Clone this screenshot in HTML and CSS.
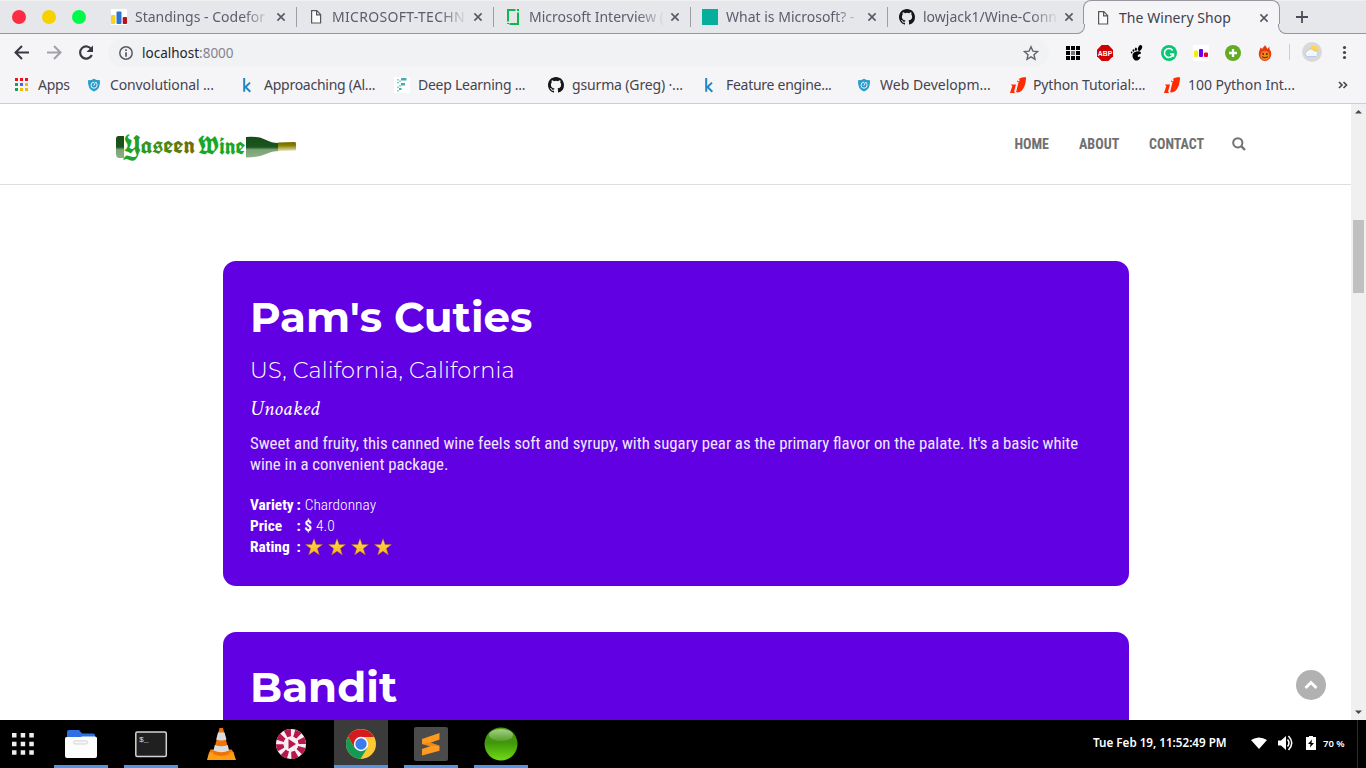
FILE: index.html
```html
<!DOCTYPE html>
<html lang="en">
<head>
<meta charset="utf-8">
<title>The Winery Shop</title>
<link rel="stylesheet" href="styles.css">
</head>
<body>
<svg class="defs" width="0" height="0">
  <symbol id="gh" viewBox="0 0 16 16"><path fill="#17151a" d="M8 0C3.58 0 0 3.58 0 8c0 3.54 2.29 6.53 5.47 7.59.4.07.55-.17.55-.38 0-.19-.01-.82-.01-1.49-2.01.37-2.53-.49-2.69-.94-.09-.23-.48-.94-.82-1.13-.28-.15-.68-.52-.01-.53.63-.01 1.08.58 1.23.82.72 1.21 1.87.87 2.33.66.07-.52.28-.87.51-1.07-1.78-.2-3.64-.89-3.64-3.95 0-.87.31-1.59.82-2.15-.08-.2-.36-1.02.08-2.12 0 0 .67-.21 2.2.82a7.6 7.6 0 0 1 4 0c1.53-1.04 2.2-.82 2.2-.82.44 1.1.16 1.92.08 2.12.51.56.82 1.27.82 2.15 0 3.07-1.87 3.75-3.65 3.95.29.25.54.73.54 1.48 0 1.07-.01 1.93-.01 2.2 0 .21.15.46.55.38A8 8 0 0 0 16 8c0-4.42-3.58-8-8-8z"/></symbol>
  <symbol id="doc" viewBox="0 0 16 16"><path fill="#fbfbfb" stroke="#5a5658" stroke-width="1.200" d="M3.600 1.600h5.200l3.800 3.800v8.600h-9zM8.600 1.800v4h3.800"/></symbol>
  <symbol id="x" viewBox="0 0 10 10"><path fill="none" stroke="#5a5866" stroke-width="1.600" d="M1.400 1.400l7.200 7.200M8.600 1.400L1.400 8.600"/></symbol>
  <symbol id="shield" viewBox="0 0 16 16"><path fill="#2b9ccb" d="M2 3.300Q5.500 3.300 8 1.800q2.500 1.500 6 1.500.6 9-6 11.200Q1.400 12.300 2 3.300z"/><path fill="none" stroke="#e9f5fa" stroke-width="1" d="M8 5.200a3 3 0 1 0 3 3q0-1.500-.8-3M7.800 8.700L9.500 5"/></symbol>
  <symbol id="k" viewBox="0 0 16 16"><path fill="none" stroke="#2086c8" stroke-width="2" d="M3.200 1v13.800M9 5.600L4.500 10l4.800 4.800"/></symbol>
  <symbol id="leaf" viewBox="0 0 16 16"><path fill="#ff2a00" d="M16 .2C16 7 13.500 15 7.500 15.600c-.8.100-1.300-.2-1.300-.8L8.500 5H7c.500-3 3-4.800 9-4.800zM.8 7.500H6L4.200 14q-.2 1.300 1 1.900L0 16l2.300-7z"/><path stroke="#f5f5f8" stroke-width="1.800" d="M8.800 2.200l-.5 2"/></symbol>
  <symbol id="star" viewBox="0 0 18 18"><path fill="url(#gold)" stroke="#9c5d00" stroke-width=".4" d="M9 .5l2.100 6.100h6.500l-5.200 3.900 2 6.500L9 13.200l-5.400 3.800 2-6.500L.4 6.600h6.500z"/></symbol>
  <defs><linearGradient id="gold" x2="0" y2="1"><stop stop-color="#ffe052"/><stop offset="1" stop-color="#fbb51c"/></linearGradient></defs>
</svg>

<header class="tabs">
  <div class="lights"><i class="red"></i><i class="yellow"></i><i class="green"></i></div>
  <div class="tab first"><svg class="fav" viewBox="0 0 16 16"><path fill="#fff" d="M0 0h16v16H0z"/><rect y="6" width="4.500" height="9" rx="1" fill="#f7d320"/><rect x="5.500" y="2.500" width="5" height="12.500" rx="1" fill="#2d76cf"/><rect x="11.700" y="8" width="4.300" height="7" rx="1" fill="#b5121b"/></svg><span class="label">Standings - Codefor</span><svg class="x"><use href="#x"/></svg></div>
  <div class="tab"><svg class="fav"><use href="#doc"/></svg><span class="label up">MICROSOFT-TECHN</span><svg class="x"><use href="#x"/></svg></div>
  <div class="tab"><svg class="fav" viewBox="0 0 16 16"><path fill="none" stroke="#0eb94b" stroke-width="2" d="M10.500 1H3v11.500M13 3.500V15H4.500M12 1h2M3 14v1"/></svg><span class="label">Microsoft Interview (</span><svg class="x"><use href="#x"/></svg></div>
  <div class="tab"><svg class="fav" viewBox="0 0 16 16"><path fill="#06ae9c" d="M0 0h16v16H0z"/></svg><span class="label">What is Microsoft? -</span><svg class="x"><use href="#x"/></svg></div>
  <div class="tab"><svg class="fav"><use href="#gh"/></svg><span class="label">lowjack1/Wine-Conn</span><svg class="x"><use href="#x"/></svg></div>
  <div class="tab active"><svg class="fav"><use href="#doc"/></svg><span class="label">The Winery Shop</span><svg class="x"><use href="#x"/></svg></div>
  <svg class="plus" viewBox="0 0 12 12"><path stroke="#4c4a5c" stroke-width="1.800" d="M6 0v12M0 6h12"/></svg>
</header>

<div class="toolbar">
  <svg class="nav" viewBox="0 0 100 36"><g fill="none" stroke="#3a3843" stroke-width="2"><path d="M29 17.500H16M22 11l-6.500 6.500L22 24"/><path stroke="#a3a1a8" d="M47 17.500h13M54 11l6.500 6.500L54 24"/><path stroke-width="2.200" d="M91.500 14.500a6.100 6.100 0 1 0 .3 5.500"/></g><path fill="#3a3843" d="M93 10.500V17h-6.500z"/></svg>
  <div class="omnibox">
    <svg width="16" height="16" viewBox="0 0 16 16"><circle cx="8" cy="8" r="6.200" fill="none" stroke="#5b5963" stroke-width="1.500"/><path stroke="#5b5963" stroke-width="1.700" d="M8 4.300V6M8 7.200v4.500"/></svg>
    <span class="url">localhost<em>:8000</em></span>
    <svg class="bm" width="16" height="16" viewBox="0 0 16 16"><path fill="none" stroke="#66646b" stroke-width="1.400" d="M8 1.800l1.900 4.300 4.600.5-3.500 3.100 1 4.600-4-2.400-4 2.400 1-4.600L1.500 6.600l4.600-.5z"/></svg>
  </div>
  <div class="exts">
    <svg viewBox="0 0 16 16"><path d="M1 1h4v4H1zM6 1h4v4H6zM11 1h4v4h-4zM1 6h4v4H1zM11 6h4v4h-4zM1 11h4v4H1zM6 11h4v4H6zM11 11h4v4h-4z"/><path fill="#777" d="M6 6h4v4H6z"/></svg>
    <svg viewBox="0 0 16 16"><path fill="#d00000" d="M4.700 0h6.600L16 4.700v6.600L11.300 16H4.700L0 11.300V4.700z"/><text class="abp" x="8" y="10.700" text-anchor="middle">ABP</text></svg>
    <svg viewBox="0 0 16 16"><path d="M5.500 7.300C8 5.800 12 6 12 8c0 1.200-3.300 1-3.300 2.700 0 1.300 1.300 1.600 2.300.8l.6 1C9.500 16.700 5 16.500 3.800 12.500c-.7-2.300-.2-4.200 1.700-5.200z"/><ellipse cx="11" cy="3" rx="1.900" ry="3" transform="rotate(25 11 3)"/><ellipse cx="6.900" cy="4.200" rx="1" ry="1.600"/><ellipse cx="4.500" cy="5.500" rx=".9" ry="1.300"/><ellipse cx="2.600" cy="7.500" rx=".8" ry="1.100"/></svg>
    <svg viewBox="0 0 16 16"><circle cx="8" cy="8" r="8" fill="#08c674"/><path fill="none" stroke="#fff" stroke-width="1.600" d="M11.700 5.500A4.500 4.500 0 1 0 12.300 9H9M12.400 8.500v3.300"/></svg>
    <svg viewBox="0 0 16 16"><path fill="#fff" d="M0 0h16v16H0z"/><rect x="1" y="5.500" width="4" height="6.500" rx="1" fill="#f7ee00"/><rect x="6" y="4" width="4" height="8" rx="1" fill="#6c00f5"/><rect x="11" y="7.500" width="4" height="4.500" rx="1" fill="#f00020"/></svg>
    <svg viewBox="0 0 16 16"><circle cx="8" cy="8" r="8" fill="#62ab25"/><path stroke="#fff" stroke-width="2.300" d="M8 4v8M4 8h8"/></svg>
    <svg viewBox="0 0 16 16"><path fill="#e93a0d" d="M8 0c1 2 2 2.500 2.400 4l2-2.500c-.2 2.300.3 3 1.300 4.500C15.500 12 12 16 8 16S.5 12 2.300 6L3.500 2.500 5.300 4C5.300 2.500 7.300 2 8 0z"/><circle cx="8" cy="10.500" r="4.500" fill="#ec8a1e"/><path fill="none" stroke="#622000" stroke-width="1.400" d="M6.200 8v2M9.800 8v2"/><path fill="none" stroke="#622000" stroke-width="1" d="M5 11.800q3 2 6 0"/></svg>
  </div>
  <svg class="tail" viewBox="0 0 77 36"><path stroke="#cdcbe0" d="M.5 9v16"/><circle cx="23" cy="17" r="10" fill="#d9d9da"/><circle cx="25" cy="15" r="4.500" fill="#ffd64f"/><path fill="#f2f6ff" stroke="#a4bfe8" stroke-width=".7" d="M18.500 21.500a2.800 2.800 0 0 1 0-5.500 3.600 3.600 0 0 1 6.500 0 2.800 2.800 0 0 1 2 5.500z"/><g fill="#46434e"><circle cx="55.500" cy="12.500" r="1.600"/><circle cx="55.500" cy="17.500" r="1.600"/><circle cx="55.500" cy="22.500" r="1.600"/></g></svg>
</div>

<nav class="bookmarks">
  <a class="b72"><svg viewBox="0 0 16 16"><path fill="#f01018" d="M0 1h3v3H0zM5 1h3v3H5zM10 1h3v3h-3z"/><path fill="#13a353" d="M0 6h3v3H0zM0 11h3v3H0z"/><path fill="#4a62f2" d="M5 6h3v3H5z"/><path fill="#f8b50a" d="M10 6h3v3h-3zM5 11h3v3H5zM10 11h3v3h-3z"/></svg><span class="w0">Apps</span></a>
  <a class="b154"><svg viewBox="1 0 16 16"><use href="#shield" width="16" height="16"/></svg><span class="w1">Convolutional ...</span></a>
  <a class="b153"><svg><use href="#k"/></svg><span class="w2">Approaching (Al...</span></a>
  <a class="b154"><svg viewBox="0 0 16 16"><path fill="#fff" d="M0 0h16v16H0z"/><path fill="#45aead" d="M7 1h5.500v2.500H7zM7 6h4v2.500H7zM5 11h2.500v2H5z"/><path fill="#8bd4d0" d="M3 2h2v1.500H3zM5 3.500h2V5H5zM3 5h2v1.500H3zM5 8h2v1.500H5zM3 9.500h2V11H3zM3 13h2v1.500H3z"/></svg><span class="w3">Deep Learning ...</span></a>
  <a class="b155"><svg><use href="#gh"/></svg><span class="w4">gsurma (Greg) ·...</span></a>
  <a class="b154"><svg><use href="#k"/></svg><span class="w5">Feature engine...</span></a>
  <a class="b153"><svg viewBox="1 0 16 16"><use href="#shield" width="16" height="16"/></svg><span class="w6">Web Developm...</span></a>
  <a class="b154"><svg><use href="#leaf"/></svg><span class="w7">Python Tutorial:...</span></a>
  <a class="b154"><svg><use href="#leaf"/></svg><span class="w8">100 Python Int...</span></a>
  <svg class="more" viewBox="0 0 10 16"><path fill="none" stroke="#4a4854" stroke-width="1.700" d="M1 5l3 3-3 3M5.500 5l3 3-3 3"/></svg>
</nav>

<div class="view">
  <main class="page">
    <div class="site-head">
      <svg class="logo" viewBox="0 0 182 36" width="182" height="36">
        <defs>
          <linearGradient id="glass" x2="0" y2="1"><stop stop-color="#174b19"/><stop offset=".5" stop-color="#1b571d"/><stop offset=".62" stop-color="#7aa377"/><stop offset="1" stop-color="#8cb086"/></linearGradient>
          <linearGradient id="neck" x2="0" y2="1"><stop stop-color="#6d6500"/><stop offset=".4" stop-color="#8a8200"/><stop offset="1" stop-color="#e5e3c0"/></linearGradient>
          <linearGradient id="word"><stop stop-color="#17a82a"/><stop offset=".5" stop-color="#3e8f16"/><stop offset="1" stop-color="#7a6a00"/></linearGradient>
        </defs>
        <path fill="url(#glass)" d="M3.500 5H9v22H3.500q-2.500-1-2.500-3.500V8q0-3 2.500-3z"/>
        <path fill="url(#glass)" d="M131 6q12-1 19 2.500 7 3.500 13 3.500v8q-6 0-12 3-8 3.500-20 3.500z"/>
        <path fill="url(#neck)" d="M163 11.500l17-.5q1 0 1 2v5q0 1.500-1 1.500l-17 .5z"/>
        <text class="word" x="9" y="22.500" fill="url(#word)" textLength="71" lengthAdjust="spacingAndGlyphs">Yaseen</text>
        <text class="word" x="83" y="24" fill="#17a82a" textLength="47" lengthAdjust="spacingAndGlyphs">Wine</text>
      </svg>
      <div class="menu"><a class="m1">HOME</a><a class="m2">ABOUT</a><a class="m3">CONTACT</a><svg width="14" height="14" viewBox="0 0 14 14"><circle cx="5.800" cy="5.800" r="4.600" fill="none" stroke="#727272" stroke-width="2"/><path stroke="#727272" stroke-width="2.400" d="M9.200 9.200l3.800 3.800"/></svg></div>
    </div>
    <section class="card">
      <h1>Pam's Cuties</h1>
      <h2>US, California, California</h2>
      <h3>Unoaked</h3>
      <p class="desc">Sweet and fruity, this canned wine feels soft and syrupy, with sugary pear as the primary flavor on the palate. It's a basic white wine in a convenient package.</p>
      <dl>
        <div><dt class="key">Variety</dt><dt>:</dt><dd>Chardonnay</dd></div>
        <div><dt class="key">Price</dt><dt>: $</dt><dd>4.0</dd></div>
        <div><dt class="key">Rating</dt><dt>:</dt><dd class="stars"><svg><use href="#star"/></svg><svg><use href="#star"/></svg><svg><use href="#star"/></svg><svg><use href="#star"/></svg></dd></div>
      </dl>
    </section>
    <section class="card"><h1>Bandit</h1></section>
    <div class="to-top"><svg width="14" height="10" viewBox="0 0 14 10"><path fill="none" stroke="#fff" stroke-width="2.800" d="M1.500 8L7 2.500 12.500 8"/></svg></div>
  </main>
  <aside class="scroll"><svg viewBox="0 0 15 6"><path fill="#484848" d="M4 5.500L7.500 2 11 5.500z"/></svg><i></i><svg viewBox="0 0 15 6"><path fill="#484848" d="M4 .5L7.500 4 11 .5z"/></svg></aside>
</div>

<footer class="dock">
  <div class="app grid"><svg viewBox="0 0 46 48"><g fill="#eee"><path d="M12 13h4.500v4.500H12zM20.700 13h4.500v4.500h-4.500zM29.300 13h4.500v4.500h-4.500zM12 21.700h4.500v4.500H12zM20.700 21.700h4.500v4.500h-4.500zM29.300 21.700h4.500v4.500h-4.500zM12 30.300h4.500v4.500H12zM20.700 30.300h4.500v4.500h-4.500zM29.300 30.300h4.500v4.500h-4.500z"/></g></svg></div>
  <div class="app open"><svg viewBox="0 0 54 48"><path fill="#2f6fe4" d="M13 12q0-2 2-2h10l3 3.500h11q2 0 2 2V20H13z"/><path fill="#fdfdfd" d="M11 18.500q0-1.500 1.500-1.500h14l2-.5h12.500q2 0 2 2V36q0 2-2 2H13q-2 0-2-2z"/><rect x="19.500" y="20.800" width="14" height="3.200" rx="1.600" fill="#f7f7f7" stroke="#ccc" stroke-width=".8"/></svg></div>
  <div class="app open"><svg viewBox="0 0 54 48"><rect x="11.800" y="12" width="30.500" height="24.500" rx="1.500" fill="#202020" stroke="#d5d5d0" stroke-width="1.500"/><text class="term" x="15" y="22">$_</text></svg></div>
  <div class="app"><svg viewBox="0 0 54 48"><path fill="#f57c00" d="M15 33l1.500-3.500h21L40 33z"/><path fill="#ff9d16" d="M15 32.500h24.500l2.500 7.500H13z"/><path fill="#ee7409" d="M25.500 8h3.500l6.500 26q-8 4-16.500 0z"/><path fill="#d9dde0" d="M24 12.500h6.500l2 7q-5 2-10.300 0zM20.800 25q6.500 2.500 13 0l1.200 5.500q-7.500 3.500-15.500 0z"/></svg></div>
  <div class="app"><svg viewBox="0 0 54 48"><circle cx="27" cy="24" r="15" fill="#f6eef0"/><circle cx="27" cy="24" r="11.200" fill="none" stroke="#b6174d" stroke-width="7.600" stroke-dasharray="5.400 3.400" transform="rotate(15 27 24)"/><circle cx="27" cy="24" r="7.400" fill="#f8eff1"/><path fill="#b6174d" d="M24.500 19l7.500 5-7.500 5z"/></svg></div>
  <div class="app open current"><svg viewBox="0 0 54 48"><circle cx="27" cy="24" r="15" fill="#fcc934"/><path fill="#d61b1e" d="M14 16.500A15 15 0 0 1 40 17H27l-6.500 11z"/><path fill="#139a57" d="M14 16.500A15 15 0 0 0 26.500 39l7-11.500-13 .5z"/><circle cx="27" cy="24" r="7.200" fill="#fff"/><circle cx="27" cy="24" r="5.700" fill="#3b7ded"/></svg></div>
  <div class="app open"><svg viewBox="0 0 54 48"><rect x="10" y="7" width="34" height="34" rx="2" fill="#4b4b4b"/><path fill="#ff9a20" d="M18 19l17.500-6v6.500l-9 3.200 9 3v5L18 35.500V29l8-2.800-8-2.200z"/><path fill="#df7f10" d="M18 24l8.500-1.500 9 3.200L26 26.300z" opacity=".6"/></svg></div>
  <div class="app open"><svg viewBox="0 0 54 48"><defs><linearGradient id="ball" x2="0" y2="1"><stop stop-color="#4a9d15"/><stop offset=".45" stop-color="#3f960b"/><stop offset="1" stop-color="#6fdc13"/></linearGradient><linearGradient id="shine" x2="0" y2="1"><stop stop-color="#a5cf88"/><stop offset="1" stop-color="#57a02a"/></linearGradient></defs><circle cx="27" cy="24" r="16.500" fill="url(#ball)"/><ellipse cx="27" cy="15" rx="12" ry="6" fill="url(#shine)"/></svg></div>
  <div class="status"><span class="clock">Tue Feb 19, 11:52:49 PM</span>
    <svg viewBox="0 0 68 20" width="68" height="20"><path fill="#fff" d="M0 7q8-5 16 0l-8 9zM27 7.500h3l5-4.500v14l-5-4.500h-3zM55 4h3V3h4v1h3v13H55z"/><path fill="none" stroke="#fff" stroke-width="1.500" d="M36.500 6.500q3 3.500 0 7M37.500 3q6.500 7 0 14"/><path d="M61 6.500l-4 4.500h2.500l-.5 3.500 4-4.500h-2.500z"/></svg>
    <span class="pct">70 %</span></div>
</footer>
</body>
</html>
```
FILE: styles.css
```css
* { box-sizing: border-box; }
body { margin: 0; width: 1366px; height: 768px; overflow: hidden; display: flex; flex-direction: column; background: #fff; font-family: "Noto Sans", sans-serif; }
svg { display: block; flex: none; }
.defs { position: absolute; }

.tabs { height: 34px; flex: none; display: flex; background: #e6e7eb; box-shadow: inset 0 -1px #98959f, inset 0 1px #f0f0f2; }
.lights { width: 99px; padding: 10px 0 0 12px; display: flex; gap: 16px; }
.lights i { width: 14px; height: 14px; border-radius: 50%; }
.red { background: #fc2c43; }
.yellow { background: #f7d000; }
.green { background: #00fa4a; }
.tab { width: 197px; height: 34px; padding: 0 10px 0 12px; display: flex; align-items: center; position: relative; }
.tab::before { content: ""; position: absolute; left: 0; top: 7px; width: 1px; height: 20px; background: #a09da6; }
.tab.first::before { display: none; }
.fav { width: 16px; height: 16px; margin-right: 8px; }
.label { width: 136px; height: 34px; line-height: 33px; white-space: nowrap; font-size: 14px; color: #5d5b6c; -webkit-mask-image: linear-gradient(90deg, #000 108px, transparent 136px); }
.up { letter-spacing: .3px; }
.x { width: 10px; height: 10px; margin-left: 5px; }
.tab.active { width: 197px; margin-left: -1px; border: 1px solid #98959f; border-bottom: 0; border-radius: 8px 8px 0 0; background: #f5f5f8; padding-left: 11px; }
.tab.active::before, .tab.active::after { content: ""; position: absolute; top: auto; bottom: 0; width: 9px; height: 9px; background: #e6e7eb; border: 0 solid #98959f; border-bottom-width: 1px; }
.tab.active::before { left: -9px; border-right-width: 1px; border-bottom-right-radius: 8px; box-shadow: 4px 4px 0 #f5f5f8; }
.tab.active::after { right: -9px; left: auto; border-left-width: 1px; border-bottom-left-radius: 8px; box-shadow: -4px 4px 0 #f5f5f8; }
.tab.active .label { color: #42404c; letter-spacing: .05px; -webkit-mask-image: none; }
.tab.active .x { margin-left: 6px; }
.plus { width: 12px; height: 12px; margin: 11px 0 0 16px; }

.toolbar { height: 37px; flex: none; display: flex; background: #f5f5f8; }
.nav { width: 100px; height: 36px; margin-top: 1px; }
.omnibox { width: 941px; height: 28px; margin: 5px 0 0 8px; padding: 0 10px; border-radius: 14px; background: #f1f2f4; display: flex; align-items: center; }
.url { margin-left: 8px; font-size: 13.500px; color: #26242c; }
.url em { font-style: normal; color: #85838b; }
.bm { margin-left: auto; }
.exts { margin: 11px 0 0 16px; display: flex; gap: 16px; }
.exts svg { width: 16px; height: 16px; }
.abp { font: bold 6.800px "Liberation Sans", sans-serif; fill: #fff; }
.tail { width: 77px; height: 36px; margin: 1px 0 0 16px; }

.bookmarks { height: 33px; flex: none; padding-left: 15px; display: flex; background: #f5f5f8; border-bottom: 1px solid #cdcbdd; }
.bookmarks a { display: flex; align-items: center; height: 28px; white-space: nowrap; font-size: 14px; color: #45434f; }
.bookmarks a svg { width: 16px; height: 16px; margin-right: 7px; }
.bookmarks a span { position: relative; top: -1px; }
.w0 { letter-spacing: -.3px; }
.w1 { letter-spacing: -.13px; }
.w2, .w3 { letter-spacing: -.26px; }
.w3, .w4, .w8 { margin-left: 1px; }
.w4 { letter-spacing: -.15px; }
.w5 { letter-spacing: -.28px; }
.w7 { letter-spacing: -.15px; }
.w8 { letter-spacing: -.03px; }
.b72 { width: 72px; }
.b153 { width: 153px; }
.b154 { width: 154px; }
.b155 { width: 155px; }
.more { width: 10px; height: 16px; margin: 6px 0 0 20px; }

.view { height: 616px; flex: none; display: flex; }
.page { width: 1351px; overflow: hidden; position: relative; font-family: "Roboto Condensed", Roboto, sans-serif; font-stretch: 75%; }
.site-head { height: 81px; padding: 27px 105px 0 115px; display: flex; justify-content: space-between; border-bottom: 1px solid #dedede; }
.menu { display: flex; padding-top: 3px; height: 24px; line-height: 20px; font-size: 14px; font-weight: 700; color: #707070; }
.menu a { white-space: nowrap; }
.m1 { width: 65px; padding-left: .4px; }
.m2 { width: 70px; }
.m3 { width: 83px; }
.menu svg { margin-top: 3px; }

.card { width: 906px; height: 325px; margin: 76px 0 0 223px; padding: 26px 27px; border-radius: 13px; background: #6000e3; color: #fff; }
.card + .card { margin-top: 46px; padding-top: 25px; }
h1, h2, h3, p, dl, dd { margin: 0; }
h1 { height: 62px; line-height: 60px; font-family: Montserrat, Inter, sans-serif; font-size: 42px; font-weight: 700; font-stretch: normal; }
h2 { height: 44px; line-height: 43px; font-family: Montserrat, Inter, sans-serif; font-size: 22.400px; font-weight: 300; letter-spacing: .17px; font-stretch: normal; }
h3 { height: 40px; line-height: 31px; font-family: "Crimson Text", "Liberation Serif", serif; font-size: 21.600px; font-style: italic; font-weight: 400; font-stretch: normal; }
.desc { height: 62px; line-height: 21px; font-size: 16.780px; color: #f0e6fd; }
dl div { display: flex; height: 21px; line-height: 21px; font-size: 15.400px; }
dt { font-weight: 700; margin-right: 4px; }
dd { font-weight: 300; }
dt.key { width: 46.500px; margin: 0; }
.stars { display: flex; gap: 5px; padding-top: 1px; }
.stars svg { width: 18px; height: 18px; }
.logo { overflow: visible; }
.word { font: bold 24.500px "UnifrakturCook", "UnifrakturMaguntia", "Pirata One", "Old English Text MT", "Liberation Serif", serif; }
.to-top { position: absolute; left: 1296px; top: 566px; width: 30px; height: 30px; border-radius: 50%; background: #b1b1b1; display: flex; align-items: center; justify-content: center; }

.scroll { width: 15px; background: #f0f0f0; display: flex; flex-direction: column; padding: 4px 0; }
.scroll svg { width: 15px; height: 6px; }
.scroll i { width: 11px; height: 73px; margin: 106px 0 auto 2px; background: #c0c0c0; }

.dock { height: 48px; flex: none; display: flex; background: #000; color: #fff; }
.app { width: 54px; height: 48px; margin-right: 16px; }
.app svg { width: 54px; height: 48px; }
.grid { width: 46px; margin-right: 8px; }
.app.grid svg { width: 46px; }
.open { box-shadow: inset 0 -3px #5294e2; }
.current { background: #3b3b3b; }
.term { font: 8px "Liberation Mono", monospace; fill: #ddd; }
.status { margin-left: auto; width: 273px; display: flex; align-items: center; font-weight: 600; white-space: nowrap; }
.status svg { margin: -3px 4px 0 24px; }
.clock { width: 134px; margin-top: -3px; font-size: 11.650px; }
.pct { font-size: 9.500px; margin-top: -1px; }
.status::after { content: ""; width: 1px; height: 48px; margin-left: 12px; background: #2c2c2c; }
```
